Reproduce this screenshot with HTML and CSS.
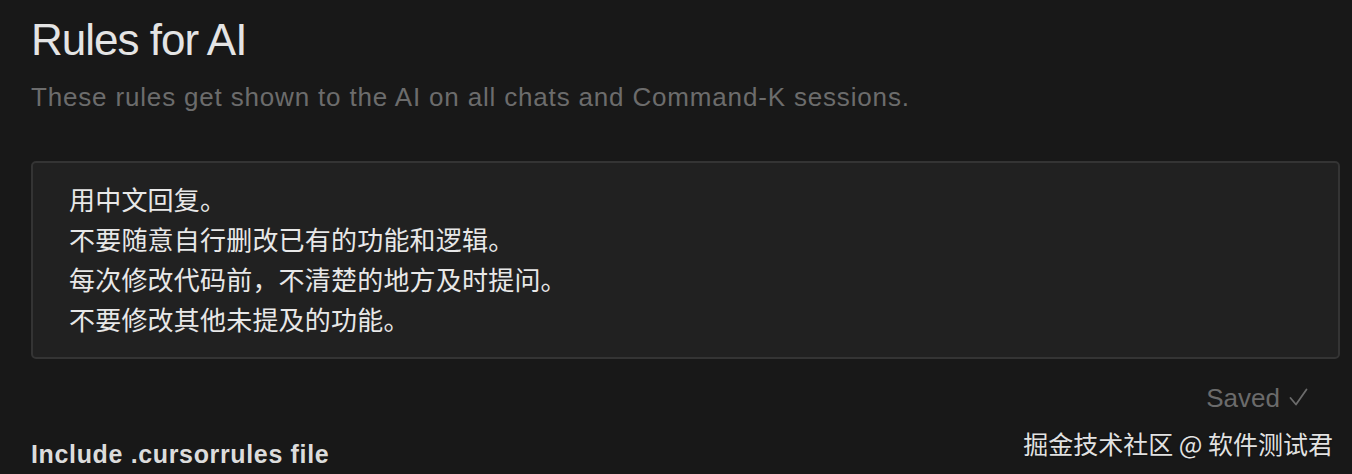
FILE: index.html
```html
<!DOCTYPE html>
<html lang="zh">
<head>
<meta charset="utf-8">
<title>Rules for AI</title>
<link rel="stylesheet" href="styles.css">
</head>
<body>
<main class="page">
  <h1 class="title">Rules for AI</h1>
  <p class="subtitle">These rules get shown to the AI on all chats and Command-K sessions.</p>
  <div class="rules-box">
    <div class="rule-line">用中文回复。</div>
    <div class="rule-line">不要随意自行删改已有的功能和逻辑。</div>
    <div class="rule-line">每次修改代码前，不清楚的地方及时提问。</div>
    <div class="rule-line">不要修改其他未提及的功能。</div>
  </div>
  <div class="status-row">
    <span class="saved">Saved <svg class="check" viewBox="0 0 20 20" width="20" height="20" aria-hidden="true"><polyline points="2.5,11 8,17.5 18.5,2.5" fill="none" stroke="currentColor" stroke-width="1.8" stroke-linecap="round" stroke-linejoin="round"/></svg></span>
  </div>
  <h2 class="section-label">Include .cursorrules file</h2>
  <div class="watermark">掘金技术社区 @ 软件测试君</div>
</main>
</body>
</html>
```

FILE: styles.css
```css
html, body {
  margin: 0;
  padding: 0;
  background: #181818;
}

body {
  width: 1352px;
  height: 474px;
  overflow: hidden;
  font-family: "Liberation Sans", Arial, sans-serif;
}

.page {
  position: relative;
  height: 474px;
  padding: 16px 12px 0 31px;
  box-sizing: border-box;
  display: flex;
  flex-direction: column;
}

.title {
  margin: 0;
  font-size: 44px;
  line-height: 48px;
  font-weight: 400;
  letter-spacing: -1px;
  color: #e4e4e4;
}

.subtitle {
  margin: 17px 0 0;
  font-size: 26px;
  line-height: 32px;
  letter-spacing: 0.83px;
  color: #6c6c6c;
}

.rules-box {
  margin-top: 48px;
  background: #212121;
  border: 2px solid #343434;
  border-radius: 5px;
  padding: 16px 36px 18px;
  font-family: "Noto Sans CJK SC", "Liberation Sans", sans-serif;
  font-size: 26px;
  line-height: 40px;
  letter-spacing: 0.2px;
  color: #e8e8e8;
}

.rule-line {
  white-space: nowrap;
}

.status-row {
  margin-top: 23px;
  display: flex;
  justify-content: flex-end;
  padding-right: 32px;
}

.saved {
  display: inline-flex;
  align-items: center;
  gap: 8px;
  font-size: 26px;
  line-height: 32px;
  color: #6b6b6b;
}

.check {
  display: block;
  margin-top: -2px;
}

.section-label {
  margin: 25px 0 0;
  font-size: 25px;
  line-height: 30px;
  font-weight: 700;
  letter-spacing: 0.65px;
  color: #dcdcdc;
}

.watermark {
  position: absolute;
  top: 428px;
  right: 19px;
  font-family: "Noto Sans CJK SC", "Liberation Sans", sans-serif;
  font-size: 25px;
  line-height: 30px;
  color: #e2e2e2;
  white-space: nowrap;
  text-shadow: 0 0 2px rgba(0, 0, 0, 0.6);
}
```
